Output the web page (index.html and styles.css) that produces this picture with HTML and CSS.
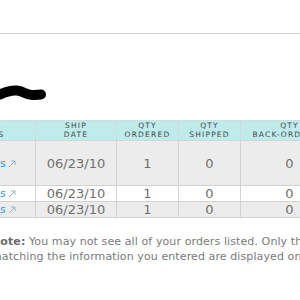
FILE: index.html
```html
<!DOCTYPE html>
<html>
<head>
<meta charset="utf-8">
<link rel="stylesheet" href="styles.css">
</head>
<body>
<div class="topbar"></div>
<div class="title-area">
  <svg class="scribble" width="50" height="18" viewBox="0 0 50 18">
    <path d="M3 10.5 C 8 8, 13 6, 20 6.5 C 26 7, 29 11, 35 11 C 39 11, 42 10.5, 44 10.5" fill="none" stroke="#000" stroke-width="10" stroke-linecap="round" stroke-linejoin="round"/>
  </svg>
</div>
<div class="content">
  <table class="orders">
    <colgroup>
      <col class="c-link"><col class="c-date"><col class="c-qty"><col class="c-qty"><col class="c-back">
    </colgroup>
    <thead>
      <tr>
        <th>ORDER<br>DETAILS</th>
        <th>SHIP<br>DATE</th>
        <th>QTY<br>ORDERED</th>
        <th>QTY<br>SHIPPED</th>
        <th>QTY<br>BACK-ORDERED</th>
      </tr>
    </thead>
    <tbody>
      <tr class="shade tall">
        <td class="link"><a href="#">Packages</a><svg class="ext" width="8" height="8" viewBox="0 0 8 8"><path d="M1 7 L7 1 M3 1 H7 V5" fill="none" stroke="#9ab0c4" stroke-width="1"/></svg></td>
        <td>06/23/10</td><td>1</td><td>0</td><td>0</td>
      </tr>
      <tr>
        <td class="link"><a href="#">Packages</a><svg class="ext" width="8" height="8" viewBox="0 0 8 8"><path d="M1 7 L7 1 M3 1 H7 V5" fill="none" stroke="#9ab0c4" stroke-width="1"/></svg></td>
        <td>06/23/10</td><td>1</td><td>0</td><td>0</td>
      </tr>
      <tr class="shade">
        <td class="link"><a href="#">Packages</a><svg class="ext" width="8" height="8" viewBox="0 0 8 8"><path d="M1 7 L7 1 M3 1 H7 V5" fill="none" stroke="#9ab0c4" stroke-width="1"/></svg></td>
        <td>06/23/10</td><td>1</td><td>0</td><td>0</td>
      </tr>
    </tbody>
  </table>
</div>
<p class="note"><b>Note:</b> You may not see all of your orders listed. Only the orders<br>matching the information you entered are displayed on this page.</p>
</body>
</html>
```

FILE: styles.css
```css
html, body {
  margin: 0;
  padding: 0;
  background: #fff;
  overflow: hidden;
}
body {
  font-family: "DejaVu Sans", Verdana, sans-serif;
  width: 300px;
  height: 300px;
}
.topbar {
  height: 33px;
  border-bottom: 1px solid #d0d0d0;
}
.title-area {
  height: 86px;
  padding-top: 50px;
  box-sizing: border-box;
}
.scribble {
  display: block;
  margin-left: -3px;
}
.content {
  margin-left: -66px;
  width: 420px;
}
.orders {
  border-collapse: collapse;
  table-layout: fixed;
  width: 404px;
  border-top: 1px solid #cfdede;
}
.c-link { width: 101px; }
.c-date { width: 81px; }
.c-qty { width: 62px; }
.c-back { width: 98px; }
.orders th {
  background: #c0ebeb;
  color: #3f4a4a;
  font-weight: normal;
  font-size: 7.5px;
  letter-spacing: 1.2px;
  line-height: 8.5px;
  height: 19px;
  padding: 0;
  text-align: center;
  border-left: 1px solid #cfdcdc;
  border-right: 1px solid #cfdcdc;
  border-bottom: 1px solid #cfd8d8;
}
.orders td {
  color: #707070;
  font-size: 13px;
  line-height: 15px;
  height: 15px;
  padding: 0;
  text-align: center;
  vertical-align: middle;
  border: 1px solid #d2d2d2;
  background: #fff;
}
.orders tr.shade td {
  background: #ececec;
}
.orders tr.tall td {
  height: 44px;
}
.orders td.link {
  font-size: 11px;
}
.orders td.link a {
  color: #2e9ae0;
  text-decoration: none;
}
.ext {
  margin-left: 2px;
  vertical-align: -1px;
}
.note {
  margin: 17px 0 0 -9px;
  font-size: 11px;
  letter-spacing: 0.1px;
  line-height: 14.5px;
  color: #7a7a7a;
  white-space: nowrap;
}
.note b {
  color: #6a6a6a;
}
```
